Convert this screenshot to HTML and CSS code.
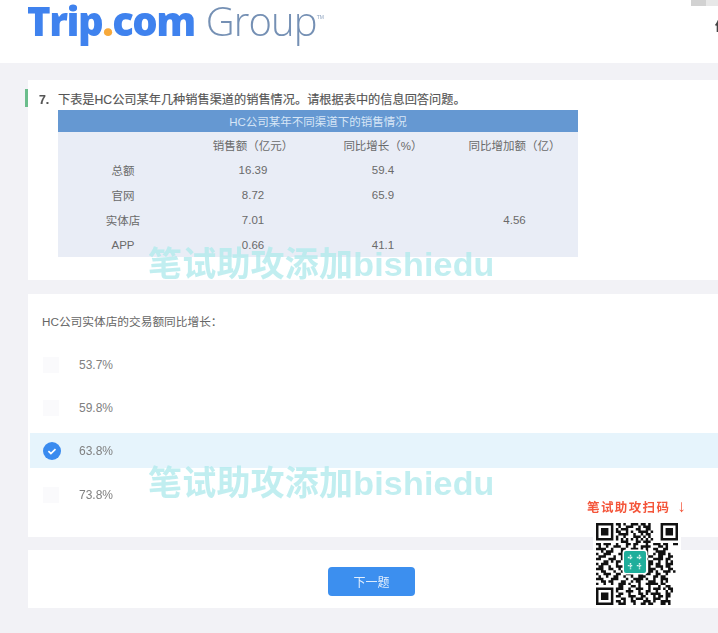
FILE: index.html
```html
<!DOCTYPE html>
<html lang="zh-CN">

<head>
    <meta charset="UTF-8" />
    <title>Trip.com Group 笔试</title>
    <link rel="stylesheet" href="styles.css">
</head>

<body>

    <div class="page">
        <header class="top">
            <div class="logo"><span class="logo-trip">Trip<span class="logo-dot">.</span>com</span><span class="logo-group">Group</span><span class="logo-tm">TM</span></div>
            <div class="top-user">你</div>
            <div class="top-chip"></div>
        </header>

        <main class="content">
            <section class="card card-material">
                <h2 class="stem"><span class="stem-no">7.</span>下表是HC公司某年几种销售渠道的销售情况。请根据表中的信息回答问题。</h2>
                <table class="sales">
                    <thead>
                        <tr>
                            <th colspan="4">HC公司某年不同渠道下的销售情况</th>
                        </tr>
                    </thead>
                    <tbody>
                        <tr>
                            <td></td>
                            <td>销售额（亿元）</td>
                            <td>同比增长（%）</td>
                            <td>同比增加额（亿）</td>
                        </tr>
                        <tr>
                            <td>总额</td>
                            <td>16.39</td>
                            <td>59.4</td>
                            <td></td>
                        </tr>
                        <tr>
                            <td>官网</td>
                            <td>8.72</td>
                            <td>65.9</td>
                            <td></td>
                        </tr>
                        <tr>
                            <td>实体店</td>
                            <td>7.01</td>
                            <td></td>
                            <td>4.56</td>
                        </tr>
                        <tr>
                            <td>APP</td>
                            <td>0.66</td>
                            <td>41.1</td>
                            <td></td>
                        </tr>
                    </tbody>
                </table>
            </section>

            <section class="card card-question">
                <p class="question">HC公司实体店的交易额同比增长：</p>
                <ul class="options">
                    <li class="option"><span class="mark"></span>53.7%</li>
                    <li class="option"><span class="mark"></span>59.8%</li>
                    <li class="option option-on">
                        <svg class="mark-on" viewBox="0 0 18 18" width="18" height="18">
                            <circle cx="9" cy="9" r="9" fill="#3a8bef" />
                            <path d="M5.4 9.2l2.5 2.3 4.6-4.4" fill="none" stroke="#fff" stroke-width="1.7" />
                        </svg>63.8%
                    </li>
                    <li class="option"><span class="mark"></span>73.8%</li>
                </ul>
            </section>

            <section class="card card-next">
                <button class="next-btn">下一题</button>
            </section>
        </main>
    </div>

    <div class="watermark watermark-a">笔试助攻添加bishiedu</div>
    <div class="watermark watermark-b">笔试助攻添加bishiedu</div>

    <aside class="promo">
        <div class="promo-title">笔试助攻扫码 <span class="promo-arrow">↓</span></div>
        <div class="qr">
            <svg viewBox="0 0 33 33" width="82" height="82">
                <!-- finder squares -->
                <path fill="#111" fill-rule="evenodd" d="M0 0h7v7h-7zM1 1v5h5v-5zM2 2h3v3h-3zM26 0h7v7h-7zM27 1v5h5v-5zM28 2h3v3h-3zM0 26h7v7h-7zM1 27v5h5v-5zM2 28h3v3h-3z" />
                <!-- data modules -->
                <path fill="none" stroke="#111" stroke-width="1" d="M8 .5h2m1 0h1m2 0h3m1 0h2m1 0h1
                    M9 1.5h1m2 0h3m2 0h1m1 0h3
                    M8 2.5h1m1 0h3m3 0h2m2 0h2
                    M8 3.5h2m2 0h1m1 0h1m2 0h4m1 0h1
                    M9 4.5h4m2 0h1m2 0h1m1 0h2
                    M8 5.5h1m2 0h1m3 0h3m1 0h1m1 0h1
                    M8 6.5h1m1 0h1m1 0h1m1 0h1m1 0h1m1 0h1m1 0h1m1 0h1
                    M10 7.5h3m3 0h2m1 0h3
                    M0 8.5h2m1 0h3m2 0h1m3 0h2m1 0h2m3 0h1m2 0h3m1 0h2m2 0h2
                    M1 9.5h1m2 0h1m2 0h3m2 0h1m2 0h1m2 0h4m3 0h2m1 0h1
                    M0 10.5h4m2 0h1m3 0h2m2 0h3m1 0h1m1 0h1m2 0h2m2 0h2
                    M2 11.5h1m1 0h3m3 0h1m1 0h2m2 0h2m2 0h1m3 0h4
                    M0 12.5h1m2 0h3m3 0h3m6 0h3m2 0h1m1 0h3m1 0h1
                    M1 13.5h3m3 0h1m2 0h2m9 0h2m2 0h2m2 0h2
                    M0 14.5h2m3 0h3m2 0h1m9 0h1m2 0h4m1 0h2
                    M3 15.5h2m1 0h1m1 0h2m1 0h1m9 0h2m2 0h1m2 0h1m1 0h1
                    M0 16.5h1m1 0h3m3 0h1m3 0h1m8 0h2m1 0h2m2 0h3
                    M1 17.5h2m2 0h1m2 0h3m1 0h1m8 0h1m2 0h3m1 0h2
                    M0 18.5h3m2 0h2m2 0h1m3 0h1m7 0h3m2 0h1m2 0h2
                    M2 19.5h2m3 0h1m2 0h3m8 0h2m1 0h1m2 0h3m1 0h1
                    M0 20.5h1m2 0h3m2 0h2m2 0h3m2 0h2m1 0h2m2 0h2m2 0h1
                    M1 21.5h1m2 0h1m2 0h2m2 0h1m2 0h1m2 0h3m3 0h2m1 0h2
                    M0 22.5h3m3 0h3m3 0h1m2 0h4m1 0h1m2 0h1m2 0h3
                    M2 23.5h2m1 0h2m3 0h2m2 0h1m1 0h2m3 0h3m2 0h1m1 0h1
                    M0 24.5h1m2 0h1m2 0h1m2 0h3m1 0h1m3 0h1m2 0h5m1 0h2
                    M9 25.5h2m3 0h2m1 0h1m3 0h1m3 0h1m2 0h2
                    M8 26.5h3m2 0h1m2 0h3m2 0h1m1 0h3m1 0h1m1 0h2
                    M8 27.5h1m3 0h3m2 0h1m2 0h2m2 0h1m3 0h1m1 0h1
                    M9 28.5h2m2 0h1m3 0h2m1 0h1m1 0h4m2 0h2
                    M8 29.5h2m3 0h3m2 0h2m3 0h1m1 0h2m1 0h2
                    M10 30.5h2m2 0h1m1 0h3m1 0h1m2 0h3m2 0h1
                    M8 31.5h2m1 0h1m2 0h2m3 0h3m1 0h1m2 0h4
                    M9 32.5h3m3 0h1m2 0h2m1 0h2m3 0h2m1 0h1" />
            </svg>
            <div class="qr-logo">
                <svg viewBox="0 0 20 20" width="18" height="18">
                    <path fill="none" stroke="#dff6f0" stroke-width="1.6" stroke-dasharray="2 1" d="M2 5h6M5 2v6M12 5h6M15 2v6M2 14h6M5 11v7M12 14h6M15 11v7" />
                </svg>
            </div>
        </div>
    </aside>

</body>

</html>
```

FILE: styles.css
```css
html,
body {
    margin: 0;
    height: 633px;
    overflow: hidden;
    background-color: #f2f2f6;
}

body {
    position: relative;
    font-family: "Liberation Sans", "Noto Sans CJK SC", sans-serif;
    color: #666;
}

.page {
    filter: blur(0.45px);
}

.top {
    position: relative;
    height: 63px;
    background: #fff;
    display: flex;
    justify-content: space-between;
    align-items: flex-start;
    padding-left: 27px;
    overflow: hidden;
}

.logo {
    display: flex;
    align-items: baseline;
    margin-top: 1px;
    line-height: 40px;
}

.logo-trip {
    font-family: "Open Sans", sans-serif;
    font-size: 40px;
    font-weight: 800;
    letter-spacing: -1.5px;
    color: #3f82ee;
}

.logo-dot {
    color: #f7a93b;
}

.logo-group {
    margin-left: 11px;
    font-family: "Open Sans", sans-serif;
    font-size: 40px;
    font-weight: 300;
    letter-spacing: -0.9px;
    color: #7590b4;
}

.logo-tm {
    align-self: flex-start;
    margin-top: 13px;
    font-size: 5px;
    line-height: 6px;
    color: #8ea3c0;
}

.top-user {
    margin-top: 19px;
    margin-right: -9px;
    font-size: 12px;
    line-height: 16px;
    font-weight: bold;
    color: #444;
}

.top-chip {
    position: absolute;
    right: 0;
    top: 0;
    width: 27px;
    height: 6px;
    background: linear-gradient(90deg, #d2d2d2 55%, #e8e8e8 55%);
}

.content {
    padding: 17px 0 0 28px;
    display: flex;
    flex-direction: column;
    gap: 14px;
}

.card {
    background: #fff;
}

.card-material {
    position: relative;
    height: 200px;
    box-sizing: border-box;
    padding: 12px 0 0 30px;
}

.card-material::before {
    content: "";
    position: absolute;
    left: -3px;
    top: 9px;
    width: 3px;
    height: 18px;
    background: #6bbd8c;
}

.stem {
    margin: 0;
    height: 18px;
    font-size: 12.2px;
    font-weight: normal;
    line-height: 17px;
    color: #555;
    -webkit-text-stroke: 0.15px #555;
}

.stem-no {
    position: absolute;
    left: 11px;
    font-weight: bold;
}

.sales {
    width: 520px;
    border-collapse: collapse;
    table-layout: fixed;
    font-size: 11.5px;
    background: #e9edf6;
}

.sales th {
    height: 22px;
    padding: 0;
    background: #6598d2;
    color: #d7e6f6;
    font-weight: normal;
}

.sales td {
    height: 25px;
    padding: 0;
    text-align: center;
    color: #6a6a6a;
}

.sales td:nth-child(1) {
    width: 118px;
}

.sales td:nth-child(2) {
    width: 152px;
}

.sales td:nth-child(3) {
    width: 100px;
}

.sales td:nth-child(4) {
    padding-left: 3px;
    box-sizing: border-box;
}

.card-question {
    height: 243px;
    box-sizing: border-box;
    padding-top: 20px;
}

.question {
    margin: 0 0 13px 14px;
    font-size: 11.7px;
    line-height: 16px;
    color: #666;
}

.options {
    margin: 0;
    padding: 0;
    list-style: none;
}

.option {
    display: flex;
    align-items: center;
    height: 43.3px;
    padding-left: 15px;
    font-size: 12px;
    color: #808080;
}

.mark {
    width: 16px;
    height: 16px;
    margin-right: 20px;
    background: #fafafc;
}

.option-on {
    margin-left: 2px;
    padding-left: 13px;
    background: linear-gradient(#fff 0, #fff 3px, #e6f4fc 3px, #e6f4fc 38px, #fff 38px);
}

.mark-on {
    margin-right: 18px;
}

.card-next {
    height: 58px;
    margin-top: -1px;
    display: flex;
    justify-content: center;
    align-items: flex-start;
    padding-right: 3px;
}

.next-btn {
    width: 87px;
    height: 29px;
    margin-top: 17px;
    border: none;
    border-radius: 4px;
    background: #3c8fef;
    color: #e3effd;
    font-family: inherit;
    font-size: 12px;
}

.watermark {
    position: absolute;
    left: 148px;
    font-size: 34px;
    font-weight: bold;
    line-height: 40px;
    white-space: nowrap;
    letter-spacing: 0.2px;
    color: rgba(178, 234, 236, 0.8);
}

.watermark-a {
    top: 244px;
}

.watermark-b {
    top: 463px;
}

.promo {
    position: absolute;
    left: 587px;
    top: 499px;
    width: 104px;
}

.promo-title {
    font-size: 12.5px;
    font-weight: bold;
    line-height: 16px;
    letter-spacing: 1.4px;
    white-space: nowrap;
    color: #f4553a;
}

.promo-arrow {
    margin-left: 2px;
    font-size: 17px;
    line-height: 16px;
}

.qr {
    position: relative;
    width: 82px;
    height: 82px;
    margin: 4px 0 0 6px;
    padding: 3px;
    background: #fff;
    filter: blur(0.5px);
}

.qr svg {
    display: block;
}

.qr-logo {
    position: absolute;
    left: 31px;
    top: 31px;
    width: 22px;
    height: 22px;
    display: flex;
    justify-content: center;
    align-items: center;
    border-radius: 2px;
    background: #1fae9b;
    box-shadow: 0 0 0 1.5px #fff;
}
```
